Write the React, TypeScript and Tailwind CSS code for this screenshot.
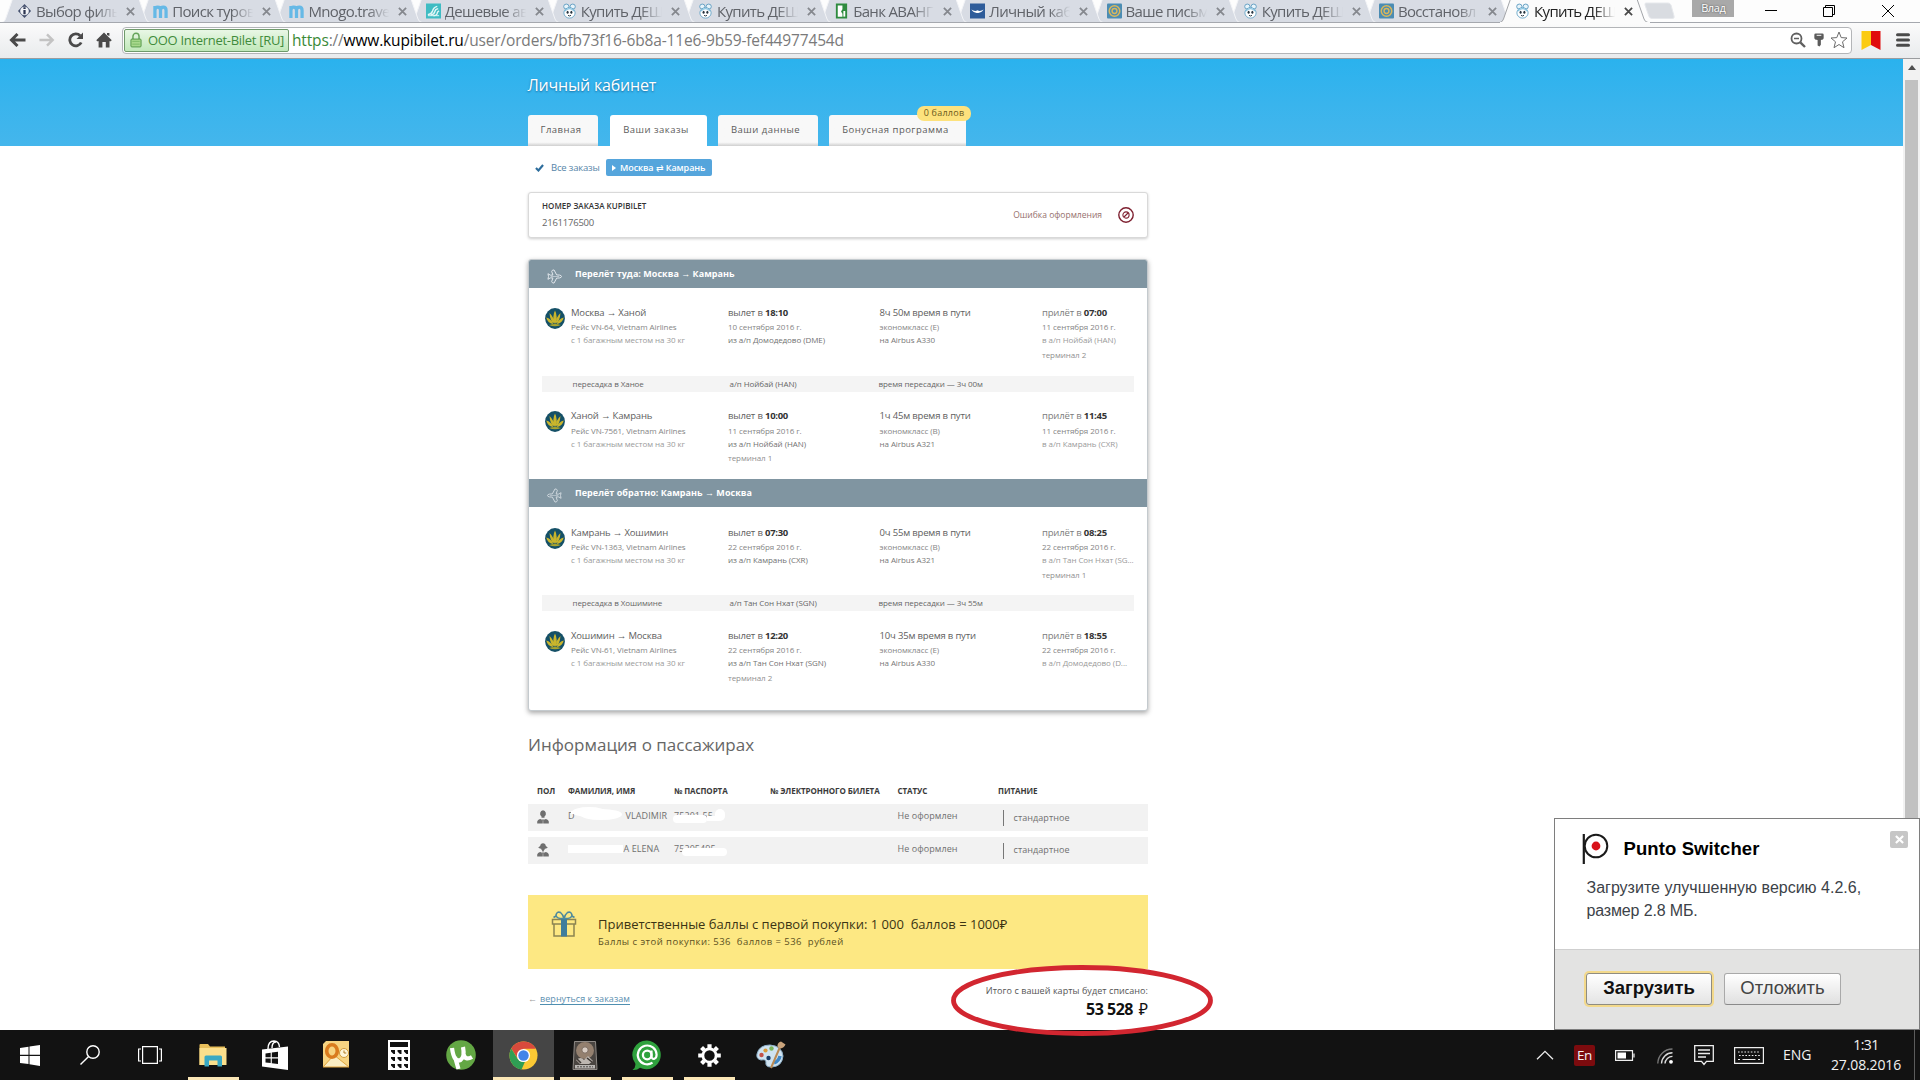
import { ReactNode } from "react";

type Segment = {
  route: string;
  flight: string;
  dep: [string, string, string, string?];
  duration: string;
  cabin: string;
  plane: string;
  arr: [string, string, string, string?];
  loose?: boolean;
};

const browserTabs = [
  { title: "Выбор филь", icon: "info" },
  { title: "Поиск туров", icon: "m" },
  { title: "Mnogo.trave", icon: "m" },
  { title: "Дешевые ав", icon: "wing" },
  { title: "Купить ДЕШ", icon: "rabbit" },
  { title: "Купить ДЕШ", icon: "rabbit" },
  { title: "Банк АВАНГ", icon: "bank" },
  { title: "Личный каб", icon: "bird" },
  { title: "Ваше письм", icon: "mail" },
  { title: "Купить ДЕШ", icon: "rabbit" },
  { title: "Восстановл", icon: "mail" },
  { title: "Купить ДЕШ", icon: "rabbit", active: true },
];

const there: Segment[] = [
  {
    route: "Москва → Ханой",
    flight: "Рейс VN-64, Vietnam Airlines",
    dep: ["18:10", "10 сентября 2016 г.", "из а/п Домодедово (DME)"],
    duration: "8ч 50м время в пути",
    cabin: "экономкласс (E)",
    plane: "на Airbus A330",
    arr: ["07:00", "11 сентября 2016 г.", "в а/п Нойбай (HAN)", "терминал 2"],
  },
  {
    route: "Ханой → Камрань",
    flight: "Рейс VN-7561, Vietnam Airlines",
    dep: ["10:00", "11 сентября 2016 г.", "из а/п Нойбай (HAN)", "терминал 1"],
    duration: "1ч 45м время в пути",
    cabin: "экономкласс (B)",
    plane: "на Airbus A321",
    arr: ["11:45", "11 сентября 2016 г.", "в а/п Камрань (CXR)"],
    loose: true,
  },
];

const back: Segment[] = [
  {
    route: "Камрань → Хошимин",
    flight: "Рейс VN-1363, Vietnam Airlines",
    dep: ["07:30", "22 сентября 2016 г.", "из а/п Камрань (CXR)"],
    duration: "0ч 55м время в пути",
    cabin: "экономкласс (B)",
    plane: "на Airbus A321",
    arr: ["08:25", "22 сентября 2016 г.", "в а/п Тан Сон Нхат (SG...", "терминал 1"],
  },
  {
    route: "Хошимин → Москва",
    flight: "Рейс VN-61, Vietnam Airlines",
    dep: ["12:20", "22 сентября 2016 г.", "из а/п Тан Сон Нхат (SGN)", "терминал 2"],
    duration: "10ч 35м время в пути",
    cabin: "экономкласс (E)",
    plane: "на Airbus A330",
    arr: ["18:55", "22 сентября 2016 г.", "в а/п Домодедово (D..."],
  },
];

function Favicon({ name }: { name: string }) {
  if (name === "info")
    return (
      <svg viewBox="0 0 16 16" className="h-4 w-[15px] shrink-0">
        <path d="M8 0.5 L15 8 L8 15.5 L1 8 Z" fill="#44506e" />
        <circle cx="8" cy="8" r="4.6" fill="#f1f3f7" />
        <path d="M6.8 7 h2.4 v4.4 h-2.4 Z M6.8 3.9 h2.4 v2 h-2.4 Z" fill="#2b3450" />
      </svg>
    );
  if (name === "m")
    return (
      <svg viewBox="0 0 16 14" className="mt-px h-[13px] w-[15px] shrink-0">
        <path d="M2 14 V1 M2 6 Q2 2.3 5 2.3 Q8 2.3 8 6 V14 M8 6 Q8 2.3 11 2.3 Q14 2.3 14 6 V14" fill="none" stroke="#66b9e6" strokeWidth="3.5" />
      </svg>
    );
  if (name === "wing")
    return (
      <svg viewBox="0 0 16 16" className="h-4 w-[15px] shrink-0">
        <rect width="16" height="16" fill="#3fbcc3" />
        <path d="M2 12 Q6 11 7 8 Q8 4 12 3 M5 12.5 Q9 11.5 9.5 8.5 Q10 6 13 5.5 M8 13 Q12 12.5 12 10 Q12.3 8.5 14 8" fill="none" stroke="#e4f8f8" strokeWidth="1.5" />
        <path d="M2 13 H14" stroke="#e4f8f8" strokeWidth="1" />
      </svg>
    );
  if (name === "rabbit")
    return (
      <svg viewBox="0 0 16 16" className="h-4 w-[15px] shrink-0">
        <ellipse cx="4.6" cy="3.3" rx="2.8" ry="2.7" fill="#e8f4fa" stroke="#5f9cc0" />
        <ellipse cx="11.4" cy="3.3" rx="2.8" ry="2.7" fill="#e8f4fa" stroke="#5f9cc0" />
        <ellipse cx="8" cy="10" rx="6" ry="5.6" fill="#fff" stroke="#6aa6c7" />
        <path d="M3 8 Q8 3 13 8" fill="none" stroke="#86c4e2" strokeWidth="1.4" />
        <ellipse cx="6" cy="9.3" rx="1.1" ry="1.6" fill="#26343f" />
        <ellipse cx="10" cy="9.3" rx="1.1" ry="1.6" fill="#26343f" />
        <path d="M6.4 12.6 Q8 14 9.6 12.6" fill="none" stroke="#26343f" strokeWidth="1" />
      </svg>
    );
  if (name === "bank")
    return (
      <svg viewBox="0 0 16 16" className="h-4 w-[15px] shrink-0">
        <rect x="2" width="12" height="16" fill="#2f8b3f" />
        <path d="M4 2 H9 V6 L7.5 8.5 L9 11 V14 H4 Z" fill="#fff" />
        <path d="M10 8 H12 V14 H10 Z" fill="#fff" />
      </svg>
    );
  if (name === "bird")
    return (
      <svg viewBox="0 0 16 16" className="h-4 w-[15px] shrink-0">
        <rect width="16" height="16" fill="#2e5c9a" />
        <path d="M1.5 6.5 Q5 9 8 7.3 Q11 9 14.5 6.5 Q12 10.5 8 10 Q4 10.5 1.5 6.5 Z" fill="#fff" />
      </svg>
    );
  return (
    <svg viewBox="0 0 16 16" className="h-4 w-[15px] shrink-0">
      <rect width="16" height="16" rx="1" fill="#4b8cb3" />
      <circle cx="8" cy="8" r="5.6" fill="none" stroke="#d9b75c" strokeWidth="1.6" />
      <circle cx="8" cy="8" r="2.6" fill="none" stroke="#d9b75c" strokeWidth="1.5" />
    </svg>
  );
}

function BrowserTab({ title, icon, active, z }: { title: string; icon: string; active?: boolean; z: number }) {
  return (
    <div className="relative h-[23px] w-[136.2px] shrink-0" style={{ zIndex: active ? 40 : z }}>
      <svg viewBox="0 0 150 23" className="absolute top-0 left-0 h-[23px] w-[150px]">
        <path
          d="M0 22.5 Q2.5 22 3.5 19 L10.5 -1 H137 L144 19 Q145 22 148 22.5 Z"
          fill={active ? "#fbfbfb" : "#d8dce4"}
          stroke={active ? "#a2a4a8" : "#f3f4f7"}
        />
        {active ? <path d="M0 22.8 H150" stroke="#fbfbfb" strokeWidth="1.5" /> : <path d="M0 22.5 H150" stroke="#a5a8ae" />}
      </svg>
      <div className="relative flex h-[22px] items-center pl-[15px]">
        <Favicon name={icon} />
        <div
          className={
            "ml-[4px] w-[83px] text-[15px] leading-[21px] tracking-[-0.65px] whitespace-nowrap [mask-image:linear-gradient(to_right,#000_72%,transparent_98%)] " +
            (active ? "text-[#222]" : "text-[#606369]")
          }
        >
          {title}
        </div>
        <svg viewBox="0 0 10 10" className="ml-[7px] h-[9px] w-[9px] shrink-0">
          <path d="M1 1 L9 9 M9 1 L1 9" stroke={active ? "#4a4a4a" : "#85888e"} strokeWidth="2" />
        </svg>
      </div>
    </div>
  );
}

function TabStrip() {
  return (
    <div className="relative flex h-[23px] border-b border-[#a5a8ae] bg-[#fdfdfd] pl-[2px]">
      {browserTabs.map((t, i) => (
        <BrowserTab key={i} z={30 - i} {...t} />
      ))}
      <svg viewBox="0 0 36 20" className="mt-px ml-[6px] h-5 w-9">
        <path d="M4 2 H26 Q28 2 29 4 L32 15 Q33 17.5 30 17.5 H10 Q8 17.5 7 15.5 L3 4 Q2.5 2 4 2 Z" fill="#d9dce1" stroke="#e6e8ec" />
      </svg>
      <div className="ml-[14px] h-[17px] w-[42px] bg-[#a9a9a9] text-center text-[11px] leading-[15px] tracking-[-0.4px] text-white [text-shadow:0_0_2px_#444]">Влад</div>
      <svg viewBox="0 0 12 12" className="mt-[5px] ml-[31px] h-3 w-3">
        <path d="M0 5.5 H12" stroke="#000" />
      </svg>
      <svg viewBox="0 0 12 12" className="mt-[5px] ml-[46px] h-3 w-3" fill="none" stroke="#000">
        <path d="M0.5 2.5 H9.5 V11.5 H0.5 Z M2.5 2.5 V0.5 H11.5 V9.5 H9.5" />
      </svg>
      <svg viewBox="0 0 12 12" className="mt-[5px] ml-[47px] h-3 w-3" stroke="#000">
        <path d="M0 0 L12 12 M12 0 L0 12" />
      </svg>
    </div>
  );
}

function Toolbar() {
  return (
    <div className="relative flex h-9 items-center border-b border-[#9a9c9f] bg-gradient-to-b from-[#fbfbfb] to-[#e9ebed]">
      <svg viewBox="0 0 17 14" className="mb-px ml-[9px] h-[14px] w-[17px]" fill="none" stroke="#4a4a4a" strokeWidth="3">
        <path d="M16.5 7 H3 M8.5 1 L2.5 7 L8.5 13" />
      </svg>
      <svg viewBox="0 0 17 14" className="mb-px ml-[13px] h-[14px] w-[16px]" fill="none" stroke="#c3c3c3" strokeWidth="2.6">
        <path d="M0.5 7 H14 M8.5 1 L14.5 7 L8.5 13" />
      </svg>
      <svg viewBox="0 0 16 16" className="mb-px ml-[13px] h-4 w-4" fill="none" stroke="#4a4a4a" strokeWidth="2.8">
        <path d="M13.2 10.5 A6 6 0 1 1 12.2 3.8" />
        <path d="M15 0.5 V7 H8.5 Z" fill="#4a4a4a" stroke="none" />
      </svg>
      <svg viewBox="0 0 16 16" className="mb-px ml-[12px] h-4 w-4" fill="#4a4a4a">
        <path d="M8 0.5 L15.8 8.3 L14.2 9.6 L13.5 9 V15.5 H9.8 V10 H6.4 V15.5 H2.6 V9 L1.8 9.6 L0.2 8.3 Z M11 1 H13.4 V4 L11 3 Z" />
      </svg>
      <div className="mr-[68px] mb-px ml-[10px] flex h-[27px] flex-1 items-center rounded-sm border border-[#b3b5b8] bg-white pl-px">
        <div className="flex h-[23px] w-[165px] items-center rounded-[2px] border border-[#6f9a6b] bg-gradient-to-b from-[#e9f7e6] to-[#c0e8b9]">
          <svg viewBox="0 0 13 17" className="ml-[5px] h-4 w-3">
            <path d="M3.2 8 V4.6 A3.3 3.3 0 0 1 9.8 4.6 V8" fill="none" stroke="#66a55c" strokeWidth="1.6" />
            <rect x="1" y="7.5" width="11" height="8.5" rx="1" fill="#a8d88c" stroke="#4f9444" />
            <path d="M2.5 10 H10.5 M2.5 13 H10.5" stroke="#7cba66" />
          </svg>
          <span className="ml-[6px] text-[13px] leading-5 tracking-[-0.3px] whitespace-nowrap text-[#3f8b3b]">ООО Internet-Bilet [RU]</span>
        </div>
        <span className="ml-[3px] flex-1 text-[15.5px] leading-6 tracking-[-0.16px] whitespace-nowrap text-[#7a7a7a]">
          <span className="text-[#3b8a37]">https</span>://<span className="text-black">www.kupibilet.ru</span>/user/orders/bfb73f16-6b8a-11e6-9b59-fef44977454d
        </span>
        <svg viewBox="0 0 16 16" className="h-4 w-4" fill="none" stroke="#606060">
          <circle cx="6.5" cy="6.5" r="5" strokeWidth="1.8" />
          <path d="M10.3 10.3 L15 15" strokeWidth="2.4" />
          <path d="M4 6.5 H9" strokeWidth="1.5" />
        </svg>
        <svg viewBox="0 0 12 15" className="ml-[7px] h-[14px] w-3" fill="#5b5b5b">
          <path d="M2.5 0.5 H9.5 Q11 0.5 11 2 V5.5 Q11 7 8 7.5 V12.5 L6.5 14.5 L4.5 13.5 V7.5 Q1 7 1 5.5 V2 Q1 0.5 2.5 0.5 Z" />
          <path d="M3.5 2.5 H8.5" stroke="#fff" />
        </svg>
        <svg viewBox="0 0 18 18" className="mr-[3px] ml-[5px] h-[18px] w-[18px]">
          <path d="M9 1 L11.2 6.6 L17 7 L12.5 10.8 L14 16.7 L9 13.5 L4 16.7 L5.5 10.8 L1 7 L6.8 6.6 Z" fill="#fff" stroke="#6c6c6c" strokeLinejoin="round" />
        </svg>
      </div>
      <svg viewBox="0 0 20 19" className="absolute top-2 left-[1861px] h-[19px] w-5">
        <path d="M0.5 0 H10 V14 L0.5 19 Z" fill="#fbcb12" />
        <path d="M10 0 H19.5 V19 L10 14 Z" fill="#e00c0c" />
      </svg>
      <svg viewBox="0 0 14 14" className="absolute top-[10px] left-[1896px] h-[14px] w-[14px]" stroke="#4a4a4a" strokeWidth="3" strokeLinecap="round">
        <path d="M1.5 1.8 H12.5 M1.5 7 H12.5 M1.5 12.2 H12.5" />
      </svg>
    </div>
  );
}

function NavTab({ children, className, active }: { children: ReactNode; className: string; active?: boolean }) {
  return (
    <div
      className={
        "relative h-[31px] rounded-t-[3px] text-center text-[9.5px] leading-[30px] tracking-[0.48px] whitespace-nowrap text-[#5b5b5b] " +
        (active ? "bg-white " : "bg-gradient-to-b from-[#f8f8f8] from-88% to-[#cfcfcf] ") +
        className
      }
    >
      {children}
    </div>
  );
}

function SiteHeader() {
  return (
    <div className="h-[87px] w-[1903px] bg-gradient-to-b from-[#2ab2ee] to-[#44b6ec] pl-[527.5px]">
      <div className="pt-[14px] text-[16px] leading-6 tracking-[-0.2px] text-white [text-shadow:0_1px_2px_rgba(0,60,110,0.6)]">Личный кабинет</div>
      <div className="mt-[18px] flex">
        <NavTab className="w-[70px] pr-[3px]">Главная</NavTab>
        <NavTab className="ml-3 w-[97px] pr-[4px]" active>Ваши заказы</NavTab>
        <NavTab className="ml-[11px] w-[100px] pr-[4px]">Ваши данные</NavTab>
        <NavTab className="ml-[11.5px] w-[137px] pr-[4px]">
          Бонусная программа
          <div className="absolute -top-[9px] right-[-5px] h-[15px] w-[54px] rounded-[7px] bg-[#fde27d] text-center text-[9px] leading-[14px] tracking-[0.25px] text-[#6b5a1c]">0 баллов</div>
        </NavTab>
      </div>
    </div>
  );
}

function PlaneIcon({ flip }: { flip?: boolean }) {
  return (
    <svg viewBox="0 0 16 16" className={"mt-[5px] h-[15px] w-[15px] " + (flip ? "-scale-x-100 opacity-80" : "")} fill="none" stroke="#e6ecf0" strokeLinejoin="round">
      <path d="M1 5 L3.5 6.5 H6.3 L5 2.5 Q5.5 0.8 7.5 1 L10.3 6.3 L13.5 6.5 Q15.5 7 15.5 8 Q15.5 9 13.5 9.5 L10.3 9.7 L7.5 15 Q5.5 15.2 5 13.5 L6.3 9.5 H3.5 L1 11 L1.6 8 Z" />
      <path d="M4 8 H13" strokeWidth="0.6" />
    </svg>
  );
}

function AirlineLogo() {
  return (
    <svg viewBox="0 0 20 21" className="mt-0.5 h-[21px] w-5">
      <ellipse cx="10" cy="10.5" rx="9.9" ry="10.4" fill="#155067" />
      <path d="M10 2.5 Q13 8 10.5 15.5 H9.5 Q7 8 10 2.5 Z M4.5 5 Q9 9 9.3 15.5 Q5 13 4.5 5 Z M15.5 5 Q11 9 10.7 15.5 Q15 13 15.5 5 Z M1.2 9.5 Q6 10.5 8.5 16 Q3 16 1.2 9.5 Z M18.8 9.5 Q14 10.5 11.5 16 Q17 16 18.8 9.5 Z" fill="#c9b52c" />
      <path d="M4 17 Q10 14.8 16 17 Q10 19.6 4 17 Z" fill="#a9a42c" />
    </svg>
  );
}

function FlightHeader({ title, flip }: { title: string; flip?: boolean }) {
  return (
    <div className="flex h-7 items-center bg-[#8095a1] pl-[18px]">
      <PlaneIcon flip={flip} />
      <span className="ml-[13px] text-[9px] leading-[14px] font-bold tracking-[0.03px] whitespace-nowrap text-white">{title}</span>
    </div>
  );
}

function Lines({ first, second, third, fourth, loose, tone, firstTone }: { first: ReactNode; second: string; third: string; fourth?: string; loose?: boolean; tone: string; firstTone: string }) {
  return (
    <div className="text-[8px] tracking-[-0.07px] whitespace-nowrap text-[#858585]">
      <div className={"h-[14px] text-[9.5px] leading-[14px] tracking-[-0.17px] " + firstTone}>{first}</div>
      <div className={"h-[14px] leading-[14px] " + (loose ? "mt-px" : "")}>{second}</div>
      <div className={"h-3 leading-3 " + tone}>{third}</div>
      {fourth && <div className={"h-[18px] text-[#8f8f8f] " + (loose ? "leading-[16px]" : "leading-[18px]")}>{fourth}</div>}
    </div>
  );
}

function SegmentRow({ s, className }: { s: Segment; className: string }) {
  return (
    <div className={"grid grid-cols-[26.5px_157px_151.5px_162.5px_92px] pl-[15.5px] " + className}>
      <AirlineLogo />
      <Lines first={s.route} second={s.flight} third="с 1 багажным местом на 30 кг" loose={s.loose} tone="text-[#9a9a9a]" firstTone="text-[#606060]" />
      <Lines first={<>вылет в <b className="tracking-[-0.3px] text-[#333]">{s.dep[0]}</b></>} second={s.dep[1]} third={s.dep[2]} fourth={s.dep[3]} loose={s.loose} tone="text-[#727272]" firstTone="text-[#606060]" />
      <Lines first={s.duration} second={s.cabin} third={s.plane} loose={s.loose} tone="text-[#787878]" firstTone="text-[#606060]" />
      <Lines first={<>прилёт в <b className="tracking-[-0.3px] text-[#333]">{s.arr[0]}</b></>} second={s.arr[1]} third={s.arr[2]} fourth={s.arr[3]} loose={s.loose} tone="text-[#9a9a9a]" firstTone="text-[#7c7c7c]" />
    </div>
  );
}

function Layover({ place, airport, time }: { place: string; airport: string; time: string }) {
  return (
    <div className="mr-[13px] ml-[13px] grid h-4 grid-cols-[157px_149px_1fr] bg-[#f4f4f4] pl-[30.5px] text-[8px] leading-4 tracking-[-0.07px] whitespace-nowrap text-[#666]">
      <span>{place}</span>
      <span>{airport}</span>
      <span>{time}</span>
    </div>
  );
}

function FlightCard() {
  return (
    <div className="mt-[21px] h-[452px] overflow-hidden rounded-[3px] border border-[#c4cace] bg-white shadow-[0_2px_5px_rgba(0,0,0,0.35)]">
      <FlightHeader title="Перелёт туда: Москва → Камрань" />
      <SegmentRow s={there[0]} className="mt-[18px] h-[70px]" />
      <Layover place="пересадка в Ханое" airport="а/п Нойбай (HAN)" time="время пересадки — 3ч 00м" />
      <SegmentRow s={there[1]} className="mt-[17px] h-[70px]" />
      <FlightHeader title="Перелёт обратно: Камрань → Москва" flip />
      <SegmentRow s={back[0]} className="mt-[19px] h-[69px]" />
      <Layover place="пересадка в Хошимине" airport="а/п Тан Сон Нхат (SGN)" time="время пересадки — 3ч 55м" />
      <SegmentRow s={back[1]} className="mt-[18px] h-[71px]" />
    </div>
  );
}

function Breadcrumb() {
  return (
    <div className="mt-[13px] flex h-[17px] items-center">
      <svg viewBox="0 0 10 9" className="ml-[7px] h-2 w-[9px]" fill="none" stroke="#2d6d9c" strokeWidth="2.4">
        <path d="M1 4.5 L3.8 7.3 L9 1.2" />
      </svg>
      <span className="ml-[7px] text-[9.5px] leading-[17px] tracking-[-0.19px] whitespace-nowrap text-[#5585a8]">Все заказы</span>
      <div className="ml-[6.5px] flex h-[17px] w-[106px] items-center rounded-[2px] bg-[#55a5dc]">
        <svg viewBox="0 0 4 6" className="ml-[6px] h-[6px] w-1">
          <path d="M0 0 L4 3 L0 6 Z" fill="#fff" />
        </svg>
        <span className="ml-[4px] text-[9px] leading-[17px] font-semibold tracking-[-0.1px] whitespace-nowrap text-white">
          Москва <span className="font-normal">⇄</span> Камрань
        </span>
      </div>
    </div>
  );
}

function OrderCard() {
  return (
    <div className="mt-4 flex h-[46px] items-center justify-between rounded-[3px] border border-[#d9d9d9] bg-white shadow-[0_1px_3px_rgba(0,0,0,0.2)]">
      <div className="pl-[13px]">
        <div className="h-4 text-[8px] leading-[14px] font-semibold tracking-[0.04px] text-[#333]">НОМЕР ЗАКАЗА KUPIBILET</div>
        <div className="h-4 text-[9.5px] leading-4 tracking-[-0.23px] text-[#666]">2161176500</div>
      </div>
      <div className="flex items-center pr-[13px]">
        <span className="text-[8.5px] leading-[14px] text-[#96706d]">Ошибка оформления</span>
        <svg viewBox="0 0 16 16" className="ml-4 h-4 w-4" fill="none" stroke="#7e2030">
          <circle cx="8" cy="8" r="7.2" strokeWidth="1.4" />
          <circle cx="8" cy="8" r="3.1" strokeWidth="1.1" />
          <path d="M6 10 L10 6" strokeWidth="1.1" />
        </svg>
      </div>
    </div>
  );
}

function PersonIcon({ female }: { female?: boolean }) {
  return (
    <svg viewBox="0 0 12 14" className="h-[14px] w-3" fill="#6f6f6f">
      {female ? (
        <path d="M6 0.3 Q8.5 0.3 8.8 3 L10.8 4.6 Q9.5 5.8 8 5.6 Q7.6 7.3 6.8 7.6 V8.6 H5.2 V7.6 Q4.4 7.3 4 5.6 Q2.5 5.8 1.2 4.6 L3.2 3 Q3.5 0.3 6 0.3 Z" />
      ) : (
        <path d="M6 0.3 A3 3.3 0 0 1 7.5 6.4 V7.8 H4.5 V6.4 A3 3.3 0 0 1 6 0.3 Z" />
      )}
      <path d="M3 9 L4.8 9.4 L5.4 13.5 H0.2 V11.5 Q0.5 9.5 3 9 Z M9 9 L7.2 9.4 L6.6 13.5 H11.8 V11.5 Q11.5 9.5 9 9 Z M5 9.6 H7 L6.4 13.5 H5.6 Z" />
    </svg>
  );
}

function Passengers() {
  return (
    <>
      <h2 className="mt-[19px] h-[30px] text-[17px] leading-[30px] text-[#666]">Информация о пассажирах</h2>
      <div className="mt-[21px] grid h-5 grid-cols-[31px_106px_96px_127.5px_100.5px_1fr] pl-[9px] text-[8px] leading-5 font-bold tracking-[-0.08px] whitespace-nowrap text-[#3a3a3a]">
        <span>ПОЛ</span>
        <span>ФАМИЛИЯ, ИМЯ</span>
        <span>№ ПАСПОРТА</span>
        <span>№ ЭЛЕКТРОННОГО БИЛЕТА</span>
        <span>СТАТУС</span>
        <span>ПИТАНИЕ</span>
      </div>
      <div className="mt-[3px] grid h-[27px] grid-cols-[31px_106px_223.5px_105px_1fr] bg-[#f2f2f2] pl-[9px] text-[9px] leading-[24px] tracking-[0.07px] whitespace-nowrap text-[#707070]">
        <span className="pt-[6px]"><PersonIcon /></span>
        <div className="relative">
          <span>D</span>
          <span className="ml-[51px]">VLADIMIR</span>
          <div className="absolute top-[3px] left-[4px] h-[10px] w-[34px] rounded-[50%] bg-white" />
          <div className="absolute top-[5px] left-[12px] h-[11px] w-[42px] rounded-[50%] bg-white" />
          <div className="absolute top-[7px] left-[3px] h-[3px] w-4 bg-white" />
        </div>
        <div className="relative">
          <span>75201 55</span>
          <div className="absolute top-[11px] left-[-1px] h-[8px] w-[34px] rounded-sm bg-white" />
          <div className="absolute top-[5px] left-[41px] h-[12px] w-[10px] rounded-full bg-white" />
          <div className="absolute top-[12px] left-[33px] h-[5px] w-[12px] bg-white" />
        </div>
        <span>Не оформлен</span>
        <div className="flex h-[27px] items-center">
          <div className="h-4 w-px bg-[#777]" />
          <span className="ml-[10px]">стандартное</span>
        </div>
      </div>
      <div className="mt-[6px] grid h-[27px] grid-cols-[31px_106px_223.5px_105px_1fr] bg-[#f2f2f2] pl-[9px] text-[9px] leading-[24px] tracking-[0.07px] whitespace-nowrap text-[#707070]">
        <span className="pt-[6px]"><PersonIcon female /></span>
        <div className="relative">
          <span className="ml-[55.5px]">A ELENA</span>
          <div className="absolute top-[8px] left-0 h-[8px] w-[55px] bg-white" />
        </div>
        <div className="relative">
          <span>75205495</span>
          <div className="absolute top-[11px] left-[8px] h-[8px] w-[45px] rounded-sm bg-white" />
        </div>
        <span>Не оформлен</span>
        <div className="flex h-[27px] items-center">
          <div className="h-4 w-px bg-[#777]" />
          <span className="mb-[2px] ml-[10px]">стандартное</span>
        </div>
      </div>
    </>
  );
}

function Bonus() {
  return (
    <div className="mt-[31px] flex h-[74px] bg-[#fde883]">
      <svg viewBox="0 0 26 26" className="mt-4 ml-[23px] h-[26px] w-[26px]" fill="none">
        <path d="M1.5 8.5 H24.5 V13 H1.5 Z M3 13 V25 H23 V13" stroke="#8c8452" strokeWidth="1.5" />
        <rect x="10" y="8" width="6" height="17.5" fill="#3f7d9c" />
        <path d="M13 7.5 Q5 8 5 4 Q6 0 9.5 1.5 Q12 3.5 13 7.5 Q14 3.5 16.5 1.5 Q20 0 21 4 Q21 8 13 7.5 M5 5 L2.5 6.5 M21 5 L23.5 6.5" stroke="#4f8a9c" strokeWidth="1.6" />
      </svg>
      <div className="ml-[21px] pt-[19px] whitespace-pre">
        <div className="h-5 text-[13px] leading-5 text-[#3b3413]">Приветственные баллы с первой покупки: 1 000  баллов = 1000₽</div>
        <div className="h-4 text-[9.5px] leading-4 tracking-[0.46px] text-[#5b501f]">Баллы с этой покупки: 536  баллов = 536  рублей</div>
      </div>
    </div>
  );
}

function Summary() {
  return (
    <div className="relative flex h-[61px] justify-between">
      <div className="flex h-[14px] pt-[23px] text-[9px] leading-[13px] whitespace-nowrap">
        <span className="w-3 text-[#999]">←</span>
        <span className="h-[12.5px] border-b border-[#4f8fb0] tracking-[0.05px] text-[#5b8fb0]">вернуться к заказам</span>
      </div>
      <div className="pt-[14px] text-right whitespace-nowrap">
        <div className="h-4 text-[9px] leading-4 tracking-[0.07px] text-[#555]">Итого с вашей карты будет списано:</div>
        <div className="h-[22px] text-[16px] leading-[20px] font-bold tracking-[-0.48px] text-[#111]">
          53 528 <span className="ml-[2px] text-[16px] font-normal tracking-normal">₽</span>
        </div>
      </div>
    </div>
  );
}

function PuntoPopup() {
  return (
    <div className="absolute top-[818px] left-[1554px] z-10 flex h-[212px] w-[366px] flex-col border border-[#7e7e7e] bg-white font-['Liberation_Sans',Arial,sans-serif]">
      <div className="flex h-[130px] pl-[26.5px]">
        <div className="flex-1">
          <div className="flex pt-[14px]">
            <svg viewBox="0 0 28 32" className="h-8 w-7">
              <path d="M1.8 1 V31" stroke="#1a1a1a" strokeWidth="2.2" />
              <circle cx="14" cy="13" r="11.3" fill="#fff" stroke="#1a1a1a" strokeWidth="2" />
              <circle cx="14" cy="13" r="4.4" fill="#d8121a" />
            </svg>
            <span className="ml-[14px] text-[18.5px] leading-8 font-bold tracking-[0.1px] text-black">Punto Switcher</span>
          </div>
          <div className="mt-[12px] ml-[5px] text-[16px] leading-[22.5px] whitespace-nowrap text-[#3c4248]">
            Загрузите улучшенную версию 4.2.6,
            <div className="tracking-[-0.15px]">размер 2.8 МБ.</div>
          </div>
        </div>
        <div className="mt-3 mr-[11px] flex h-[17px] w-[18px] items-center justify-center rounded-[2px] bg-[#c6c6c6]">
          <svg viewBox="0 0 10 10" className="h-[9px] w-[9px]">
            <path d="M1 1 L9 9 M9 1 L1 9" stroke="#fff" strokeWidth="2.4" />
          </svg>
        </div>
      </div>
      <div className="flex flex-1 items-start border-t border-[#cfcfcf] bg-[#e3e3e2] pt-[23px] pl-[31px] text-[18.5px]">
        <div className="h-8 w-[126px] rounded-[3px] border border-[#8f8c80] bg-gradient-to-b from-white to-[#e4e4e4] text-center leading-[27px] font-bold text-[#111] shadow-[0_0_0_2px_#f3d98b]">Загрузить</div>
        <div className="ml-3 h-8 w-[117px] rounded-[3px] border border-[#a9a9a9] border-b-[#8a8a8a] bg-gradient-to-b from-white to-[#e0e0e0] text-center leading-[27px] text-[#444]">Отложить</div>
      </div>
    </div>
  );
}

function TaskItem({ children, open, active, wide }: { children: ReactNode; open?: boolean; active?: boolean; wide?: boolean }) {
  return (
    <div className={"flex h-[50px] flex-col items-center " + (wide ? "w-[60px]" : "w-[62px]")}>
      <div className={"flex h-[47px] items-center justify-center pt-[3px] " + (active ? "w-[61px] bg-[#454545]" : "w-[51px]")}>{children}</div>
      {open && <div className={"h-[3px] bg-[#fbe7b6] " + (active ? "w-[61px]" : "w-[51px]")} />}
    </div>
  );
}

function Taskbar() {
  return (
    <div className="relative flex h-[50px] bg-[#121212]">
      <TaskItem wide>
        <svg viewBox="0 0 20 21" className="h-[21px] w-5" fill="#fff">
          <path d="M0 3 L8.5 1.8 V9.8 H0 Z M9.5 1.6 L20 0 V9.8 H9.5 Z M0 10.9 H8.5 V19 L0 17.9 Z M9.5 10.9 H20 V21 L9.5 19.3 Z" />
        </svg>
      </TaskItem>
      <TaskItem wide>
        <svg viewBox="0 0 20 20" className="h-5 w-5" fill="none" stroke="#fff" strokeWidth="1.4">
          <circle cx="13" cy="7" r="6.2" />
          <path d="M8.6 11.4 L0.5 19.5" />
        </svg>
      </TaskItem>
      <div className="mr-[2px]">
        <TaskItem wide>
          <svg viewBox="0 0 24 18" className="h-[18px] w-6" fill="none" stroke="#fff" strokeWidth="1.2">
            <path d="M4.6 0.6 H19.4 V17.4 H4.6 Z M3 3 H0.6 V15 H3 M21 3 H23.4 V15 H21" />
          </svg>
        </TaskItem>
      </div>
      <TaskItem open>
        <svg viewBox="0 0 28 24" className="h-6 w-7">
          <path d="M0.5 2 Q0.5 1 1.5 1 H9 L11 3.5 H26 V22 H0.5 Z" fill="#e8bf5a" />
          <path d="M0.5 5 H27.5 V22 H0.5 Z" fill="#fbdf8c" />
          <path d="M5.5 14 Q5.5 12.5 7 12.5 H21.5 Q23 12.5 23 14 V23.5 H18.5 V17.5 H10 V23.5 H5.5 Z" fill="#3aa9c4" />
        </svg>
      </TaskItem>
      <TaskItem>
        <svg viewBox="0 0 26 30" className="h-[30px] w-[26px]">
          <path d="M6 9 Q6 1 12 1 Q17 1 17.5 7 M10 8 Q10 2 14 2" fill="none" stroke="#fff" strokeWidth="1.4" />
          <path d="M0 9.5 L26 6.5 V30 L0 26.5 Z" fill="#fff" />
          <path d="M3.5 13.5 L8.7 12.8 V17.3 H3.5 Z M9.8 12.6 L16 11.8 V17.3 H9.8 Z M3.5 18.5 H8.7 V23 L3.5 22.4 Z M9.8 18.5 H16 V24 L9.8 23.2 Z" fill="#121212" />
        </svg>
      </TaskItem>
      <TaskItem>
        <svg viewBox="0 0 28 28" className="mb-[2px] -mr-px -ml-[3px] h-7 w-7">
          <path d="M4 1 H27 V27 H1 V4 Z" fill="#f7d481" />
          <path d="M12 15 L27 27 H1 Z" fill="#fbeec4" stroke="#e0a33d" />
          <ellipse cx="10" cy="11" rx="5.3" ry="6.3" fill="none" stroke="#d97b1e" strokeWidth="3.6" />
          <circle cx="22" cy="13" r="4.5" fill="#fdf4d6" stroke="#d19a3a" />
          <path d="M22 10.5 V13 H24.3" fill="none" stroke="#b37a22" />
        </svg>
      </TaskItem>
      <TaskItem>
        <svg viewBox="0 0 22 30" className="h-[30px] w-[22px]">
          <rect width="22" height="30" fill="#fff" />
          <path d="M2 2 H20 V7 H2 Z M3 10 h4 v4 h-1.5 l-2.5 -2.5 Z M9.5 10 h4 v4 h-1.5 l-2.5 -2.5 Z M16 10 h4 v4 h-1.5 l-2.5 -2.5 Z M3 17 h4 v4 h-1.5 l-2.5 -2.5 Z M9.5 17 h4 v4 h-1.5 l-2.5 -2.5 Z M16 17 h4 v4 h-1.5 l-2.5 -2.5 Z M3 24 h4 v4 h-1.5 l-2.5 -2.5 Z M9.5 24 h4 v4 h-1.5 l-2.5 -2.5 Z M16 24 h4 v4 h-1.5 l-2.5 -2.5 Z" fill="#121212" />
        </svg>
      </TaskItem>
      <TaskItem>
        <svg viewBox="0 0 30 30" className="h-[30px] w-[30px]">
          <circle cx="15" cy="15" r="14.8" fill="#63a744" />
          <path d="M6 8 Q8 23 14.5 20 Q19 17 17 7 M17.5 14 Q19 21 26 17 M9 17 L12.5 29" fill="none" stroke="#fff" strokeWidth="4.2" />
        </svg>
      </TaskItem>
      <TaskItem open active>
        <svg viewBox="0 0 30 30" className="h-[29px] w-[29px]">
          <circle cx="15" cy="15" r="14.5" fill="#fbc934" />
          <path d="M2.4 7.8 A14.5 14.5 0 0 1 27.8 8 H15 L9 18 Z" fill="#d84a3c" />
          <path d="M2.4 7.8 L9 18.5 Q12 22 16.5 21.5 L13 29.4 A14.5 14.5 0 0 1 2.4 7.8 Z" fill="#2f9e54" />
          <circle cx="15" cy="15" r="6.8" fill="#fff" />
          <circle cx="15" cy="15" r="5.4" fill="#4285e8" />
        </svg>
      </TaskItem>
      <TaskItem open>
        <svg viewBox="0 0 26 29" className="h-[29px] w-[26px]">
          <path d="M2.5 0.5 H23.5 L25 28.5 H1 Z" fill="#4a4541" stroke="#8f8a86" />
          <ellipse cx="13" cy="9.5" rx="9" ry="8.5" fill="#94806f" />
          <circle cx="13" cy="9" r="3.2" fill="#d9cdc4" stroke="#7b6b60" />
          <path d="M4 19 Q9 15 12 19 L16 15 L21 20 L17 23 H8 Z" fill="#bdb6b0" />
          <path d="M5 18 L9 22 M15 17 L20 21" stroke="#3d3733" strokeWidth="1.6" />
          <rect x="3" y="24" width="20" height="3.5" fill="#b9b6b3" />
          <path d="M5 25.8 H21" stroke="#4d4a48" strokeDasharray="2 1" />
        </svg>
      </TaskItem>
      <TaskItem open>
        <svg viewBox="0 0 30 31" className="h-[31px] w-[30px]">
          <path d="M15 0.5 A14.4 14.4 0 1 1 8 27.8 Q5 30.5 0.5 30 Q4 27.5 3.3 23.5 A14.4 14.4 0 0 1 15 0.5 Z" fill="#2fa13d" />
          <circle cx="15.2" cy="15" r="4.3" fill="none" stroke="#fff" strokeWidth="2.3" />
          <path d="M19.5 10.5 V16.5 Q19.8 19.3 22.3 18.8 Q24.6 18 24.6 14.5 A9.4 9.4 0 1 0 20.5 22.7" fill="none" stroke="#fff" strokeWidth="2.2" />
        </svg>
      </TaskItem>
      <TaskItem open>
        <svg viewBox="-11 -11 22 22" className="h-[23px] w-[23px]" fill="none" stroke="#fff">
          <circle r="6.3" strokeWidth="2.6" />
          <path d="M0 -10.8 V-7 M0 10.8 V7 M-10.8 0 H-7 M10.8 0 H7 M-7.6 -7.6 L-5 -5 M7.6 7.6 L5 5 M-7.6 7.6 L-5 5 M7.6 -7.6 L5 -5" strokeWidth="4" />
        </svg>
      </TaskItem>
      <TaskItem>
        <svg viewBox="0 0 30 28" className="h-[28px] w-[30px]">
          <path d="M14 4 Q26 5 27 15 Q26 26 15 26 Q9 26 10 21 Q10 18 5 19 Q0 18 1 13 Q3 4 14 4 Z" fill="#cfe3f1" stroke="#8fb2cb" />
          <circle cx="5.5" cy="14" r="2.2" fill="#c2524a" />
          <circle cx="9.5" cy="9.5" r="2.1" fill="#d99a3a" />
          <circle cx="15.5" cy="7.5" r="2.2" fill="#79b35a" />
          <circle cx="12.5" cy="17" r="2.2" fill="#173a66" />
          <path d="M18 22 Q23 20 24 15" fill="none" stroke="#3f87c6" strokeWidth="3.5" />
          <path d="M15 27 L24 6" stroke="#b98a54" strokeWidth="2" />
          <path d="M21.5 6 Q21 1.5 25 0.5 L29.5 3.5 Q28 7 24.5 7.5 Z" fill="#c9a37b" />
        </svg>
      </TaskItem>
      <div className="mr-[18px] ml-auto flex items-center text-[#f2f2f2]">
        <svg viewBox="0 0 18 10" className="h-[10px] w-[18px]" fill="none" stroke="#eee" strokeWidth="1.3">
          <path d="M1 9.3 L9 1.3 L17 9.3" />
        </svg>
        <div className="ml-[20px] h-[21px] w-[21px] rounded-[2px] bg-[#7c0b0e] text-center text-[13.5px] leading-[20px] tracking-[-0.5px]">En</div>
        <svg viewBox="0 0 20 11" className="ml-[20px] h-[11px] w-5" fill="none" stroke="#eee" strokeWidth="1.2">
          <path d="M0.6 0.6 H17.5 V10.4 H0.6 Z M19 3.5 V7.5" />
          <rect x="2.5" y="2.5" width="8.5" height="6" fill="#fff" stroke="none" />
        </svg>
        <svg viewBox="0 0 16 16" className="mt-[2px] ml-[22px] h-4 w-4" fill="none" stroke="#ddd" strokeWidth="1.4">
          <path d="M0.8 15.5 A14.7 14.7 0 0 1 15.5 1" stroke="#777" />
          <path d="M4.5 15.5 A11 11 0 0 1 15.5 4.8 M8 15.5 A7.5 7.5 0 0 1 15.5 8.4" />
          <circle cx="14" cy="13.8" r="1.9" fill="#fff" stroke="none" />
        </svg>
        <svg viewBox="0 0 20 21" className="ml-[21px] h-[21px] w-5" fill="none" stroke="#eee" strokeWidth="1.3">
          <path d="M0.7 0.7 H19.3 V16.3 H12.5 L10 19.5 L7.5 16.3 H0.7 Z M4 5 H16 M4 8.5 H16 M4 12 H12" />
        </svg>
        <svg viewBox="0 0 30 17" className="ml-[20px] h-[17px] w-[30px]" fill="none" stroke="#eee" strokeWidth="1.2">
          <path d="M0.6 0.6 H29.4 V16.4 H0.6 Z" />
          <path d="M4 5 H26 M5 8.5 H26" strokeDasharray="1.6 1.6" />
          <path d="M4 12.5 H6 M8.5 12.5 H21.5 M24 12.5 H26" />
        </svg>
        <span className="ml-[19px] w-[29px] text-[14px] leading-5">ENG</span>
        <div className="ml-[18px] w-[72px] text-center text-[14px] leading-[20.5px] tracking-[-0.14px]">
          <div className="tracking-[-0.6px]">1:31</div>
          <div>27.08.2016</div>
        </div>
      </div>
      <div className="absolute top-0 left-[1914px] h-[50px] w-px bg-[#5c5c5c]" />
    </div>
  );
}

export default function App() {
  return (
    <div className="relative h-[1080px] w-[1920px] overflow-hidden bg-white font-['Open_Sans','Noto_Sans','Liberation_Sans',sans-serif]">
      <TabStrip />
      <Toolbar />
      <div className="flex h-[971px]">
        <div className="w-[1903px]">
          <SiteHeader />
          <div className="ml-[528px] w-[620px]">
            <Breadcrumb />
            <OrderCard />
            <FlightCard />
            <Passengers />
            <Bonus />
            <Summary />
          </div>
        </div>
        <div className="flex w-[17px] flex-col items-center bg-[#f2f2f2]">
          <svg viewBox="0 0 8 5" className="mt-[6px] h-[5px] w-2">
            <path d="M0 5 L4 0 L8 5 Z" fill="#505050" />
          </svg>
          <div className="mt-[10px] w-[13px] flex-1 bg-[#c1c1c1]" />
        </div>
      </div>
      <PuntoPopup />
      <Taskbar />
      <svg viewBox="0 0 264 74" className="absolute top-[964px] left-[950px] z-20 h-[74px] w-[264px]">
        <ellipse cx="132" cy="36.5" rx="128.5" ry="33" fill="none" stroke="#d22630" strokeWidth="4.8" />
      </svg>
    </div>
  );
}
